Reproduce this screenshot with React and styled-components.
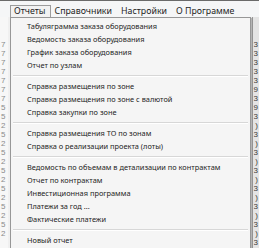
import React from 'react'
import styled, { createGlobalStyle } from 'styled-components'

const GlobalStyle = createGlobalStyle`
  html, body {
    margin: 0;
    padding: 0;
    background: #f0f0f0;
  }
`

const groups = [
  [
    'Табуляграмма заказа оборудования',
    'Ведомость заказа оборудования',
    'График заказа оборудования',
    'Отчет по узлам',
  ],
  [
    'Справка размещения по зоне',
    'Справка размещения по зоне с валютой',
    'Справка закупки по зоне',
  ],
  ['Справка размещения ТО по зонам', 'Справка о реализации проекта (лоты)'],
  [
    'Ведомость по объемам в детализации по контрактам',
    'Отчет по контрактам',
    'Инвестиционная программа',
    'Платежи за год ...',
    'Фактические платежи',
  ],
  ['Новый отчет'],
]

const topItems = ['Отчеты', 'Справочники', 'Настройки', 'О Программе']

const leftDigits = '·7·7·7·7·7·7·7·5·5·2·5·2·5·2·5·2·5·2·5·2·5·2'.split('·')
const rightDigits = '·3·3·3·3·3·9·3·9·3·)·3·)·3·)·3·)·3·)·3·)·3·)·3'.split('·')

const App = () => {
  return (
    <>
      <GlobalStyle />
      <Screen>
        <MenuBar>
          {topItems.map((t, i) => (
            <TopItem key={t} open={i === 0}>
              {t}
            </TopItem>
          ))}
        </MenuBar>
        <Workspace>
          <Column side='left'>
            {leftDigits.map((d, i) => (
              <Digit key={i}>{d || '\u00a0'}</Digit>
            ))}
          </Column>
          <Column side='right'>
            {rightDigits.map((d, i) => (
              <Digit key={i}>{d || '\u00a0'}</Digit>
            ))}
          </Column>
          <Dropdown>
            {groups.map((g, gi) => (
              <React.Fragment key={gi}>
                {gi > 0 && <Separator />}
                {g.map((label) => (
                  <Item key={label}>{label}</Item>
                ))}
              </React.Fragment>
            ))}
          </Dropdown>
        </Workspace>
      </Screen>
    </>
  )
}

const Screen = styled.div`
  width: 259px;
  height: 248px;
  overflow: hidden;
  display: flex;
  flex-direction: column;
  background: #f0f0f0;
  font-family: 'Noto Sans', 'Open Sans', sans-serif;
  color: #1e1e1e;
`

const MenuBar = styled.div`
  height: 16px;
  border-top: 1px solid #6a6a6a;
  display: flex;
  align-items: flex-end;
  padding-left: 10px;
  background: #f5f6f7;
`

const TopItem = styled.div`
  height: 12px;
  padding: 0 4px 0 3px;
  font-size: 8.8px;
  line-height: 11px;
  box-sizing: border-box;
  border: 1px solid ${(p) => (p.open ? '#9c9c9c' : 'transparent')};
  border-bottom: none;
  background: ${(p) => (p.open ? '#f2f2f2' : 'transparent')};
  position: relative;
  z-index: 2;
`

const Workspace = styled.div`
  flex: 1;
  position: relative;
  display: flex;
  justify-content: space-between;
  background: #f0f0f0;
`

const Column = styled.div`
  width: ${(p) => (p.side === 'left' ? '8px' : '6px')};
  padding-top: 14px;
  display: flex;
  flex-direction: column;
  align-items: ${(p) => (p.side === 'left' ? 'flex-start' : 'flex-end')};
  border-left: ${(p) => (p.side === 'right' ? '1px solid #9a9a9a' : 'none')};
  background: ${(p) => (p.side === 'right' ? '#e4e4e4' : '#f7f7f7')};
  color: ${(p) => (p.side === 'right' ? '#3a3a3a' : '#8a8a8a')};
  overflow: hidden;
`

const Digit = styled.span`
  font-family: 'Liberation Sans', sans-serif;
  font-size: 8px;
  line-height: 9px;
  padding: 0 1px;
`

const Dropdown = styled.div`
  position: absolute;
  left: 10px;
  top: 0;
  width: 241px;
  box-sizing: border-box;
  padding: 2px 2px;
  background: #f5f5f5;
  border: 1px solid #979797;
  box-shadow: 1px 1px 1px rgba(0, 0, 0, 0.25);
  z-index: 1;
`

const Item = styled.div`
  height: 13px;
  line-height: 13px;
  padding-left: 14px;
  font-size: 7.4px;
  white-space: nowrap;
`

const Separator = styled.div`
  height: 1px;
  margin: 3px 0 3px 0;
  background: #d7d7d7;
  border-bottom: 1px solid #ffffff;
`

export default App
